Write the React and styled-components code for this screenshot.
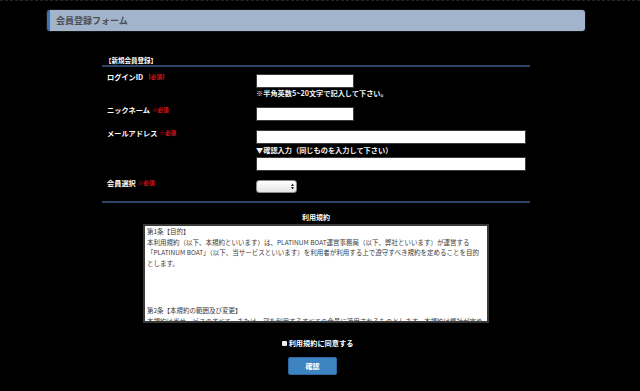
import React from "react";
import styled, { createGlobalStyle } from "styled-components";

const Global = createGlobalStyle`
  html, body { margin: 0; padding: 0; background: #000; }
  body {
    font-family: "Noto Sans CJK JP", "Noto Sans", sans-serif;
    color: #fff;
  }
  * { box-sizing: border-box; }
`;

const Page = styled.div`
  width: 640px;
  height: 391px;
  overflow: hidden;
  background: #000;
  border-top: 1px dashed #262626;
  padding-top: 9px;
`;

const HeaderBar = styled.div`
  margin-left: 47px;
  width: 538px;
  height: 21px;
  display: flex;
  align-items: center;
  padding-left: 6px;
  background: #a2b4cc;
  border-left: 3px solid #3a74b4;
  border-radius: 3px;
  box-shadow: 0 0 0 1px #141414;
  color: #4d4f55;
  font-size: 9px;
  font-weight: 700;
`;

const FormSection = styled.div`
  margin-left: 102px;
  width: 428px;
  margin-top: 24px;
  display: flex;
  flex-direction: column;
`;

const SectionTitle = styled.div`
  font-size: 6.5px;
  font-weight: 700;
  line-height: 10px;
  padding-left: 3px;
  border-bottom: 2px solid #2a4567;
`;

const Rows = styled.div`
  display: flex;
  flex-direction: column;
  gap: 9px;
  padding-top: 7px;
  padding-bottom: 8px;
  border-bottom: 2px solid #2a4567;
`;

const Row = styled.div`
  display: grid;
  grid-template-columns: 154px 1fr;
  align-items: start;
`;

const Label = styled.div`
  padding-left: 5px;
  font-size: 7.2px;
  font-weight: 700;
  line-height: 7px;
  white-space: nowrap;
  display: flex;
  align-items: center;
  gap: 2px;
`;

const Required = styled.span`
  color: #e0141b;
  font-size: 5.6px;
  font-weight: 700;
`;

const Field = styled.div`
  display: flex;
  flex-direction: column;
  align-items: flex-start;
`;

const TextInput = styled.input`
  width: ${(p) => p.$w}px;
  height: 14px;
  margin: 0;
  padding: 0 2px;
  border: 1px solid #3c3c3c;
  background: #fff;
  outline: none;
`;

const Hint = styled.div`
  font-size: 7.2px;
  font-weight: 700;
  line-height: 10px;
  color: #f2f2f2;
  white-space: nowrap;
  margin: ${(p) => p.$m || "0"};
`;

const SelectWrap = styled.div`
  position: relative;
  width: 41px;
  height: 13px;
`;

const Select = styled.select`
  appearance: none;
  -webkit-appearance: none;
  display: block;
  width: 41px;
  height: 13px;
  margin: 0;
  padding: 0;
  border: 1px solid #8a8a8a;
  border-radius: 3px;
  background: linear-gradient(#ffffff, #e4e4e4);
  outline: none;
`;

const SelectArrows = styled.svg`
  position: absolute;
  right: 3px;
  top: 3px;
  pointer-events: none;
`;

const TermsTitle = styled.div`
  margin-top: 9px;
  text-align: center;
  font-size: 7px;
  font-weight: 700;
  line-height: 10px;
`;

const TermsBox = styled.div`
  align-self: center;
  margin-top: 2px;
  width: 346px;
  height: 99px;
  overflow: hidden;
  background: #fff;
  border: 2px solid #3a3a3a;
  padding: 0 2px;
  color: #3a3a3a;
  font-size: 6.5px;
  line-height: 10.7px;
`;

const TermsPara = styled.p`
  margin: ${(p) => (p.$gap ? "36px 0 0" : "0")};
  white-space: nowrap;
`;

const AgreeRow = styled.label`
  margin-top: 15px;
  display: flex;
  justify-content: center;
  align-items: center;
  gap: 2px;
  font-size: 7.2px;
  font-weight: 700;
  line-height: 10px;
  padding-left: 3px;
`;

const Check = styled.input`
  appearance: none;
  margin: 0;
  width: 5px;
  height: 5px;
  border-radius: 1px;
  background: #eeeeee;
`;

const ButtonRow = styled.div`
  margin-top: 9px;
  display: flex;
  justify-content: center;
  padding-right: 7px;
`;

const Button = styled.button`
  width: 49px;
  height: 18px;
  border: 1px solid #2d6aa3;
  border-radius: 2px;
  background: #3d82c1;
  color: #fff;
  font-family: inherit;
  font-size: 7px;
  font-weight: 700;
  padding: 0;
  cursor: pointer;
`;

export default function App() {
  return (
    <>
      <Global />
      <Page>
        <HeaderBar>会員登録フォーム</HeaderBar>
        <FormSection>
          <SectionTitle>【新規会員登録】</SectionTitle>
          <Rows>
            <Row>
              <Label>
                ログインID<Required>【必須】</Required>
              </Label>
              <Field>
                <TextInput $w={98} />
                <Hint>※半角英数5~20文字で記入して下さい。</Hint>
              </Field>
            </Row>
            <Row>
              <Label>
                ニックネーム<Required>※必須</Required>
              </Label>
              <Field>
                <TextInput $w={98} />
              </Field>
            </Row>
            <Row>
              <Label>
                メールアドレス<Required>※必須</Required>
              </Label>
              <Field>
                <TextInput $w={270} />
                <Hint $m="1px 0 2px">▼確認入力（同じものを入力して下さい）</Hint>
                <TextInput $w={270} />
              </Field>
            </Row>
            <Row>
              <Label>
                会員選択<Required>※必須</Required>
              </Label>
              <Field>
                <SelectWrap>
                  <Select>
                    <option></option>
                  </Select>
                  <SelectArrows width="3" height="7" viewBox="0 0 3 7">
                    <path d="M0 3 L1.5 0.5 L3 3 Z" fill="#222" />
                    <path d="M0 4 L1.5 6.5 L3 4 Z" fill="#222" />
                  </SelectArrows>
                </SelectWrap>
              </Field>
            </Row>
          </Rows>
          <TermsTitle>利用規約</TermsTitle>
          <TermsBox>
            <TermsPara>
              第1条【目的】
              <br />
              本利用規約（以下、本規約といいます）は、PLATINUM BOAT運営事務局（以下、弊社といいます）が運営する
              <br />
              「PLATINUM BOAT」（以下、当サービスといいます）を利用者が利用する上で遵守すべき規約を定めることを目的
              <br />
              とします。
            </TermsPara>
            <TermsPara $gap>
              第2条【本規約の範囲及び変更】
              <br />
              本規約は当サービスのすべて、または一部を利用するすべての会員に適用されるものとします。本規約は弊社が定め
            </TermsPara>
          </TermsBox>
          <AgreeRow>
            <Check type="checkbox" />
            利用規約に同意する
          </AgreeRow>
          <ButtonRow>
            <Button>確認</Button>
          </ButtonRow>
        </FormSection>
      </Page>
    </>
  );
}
